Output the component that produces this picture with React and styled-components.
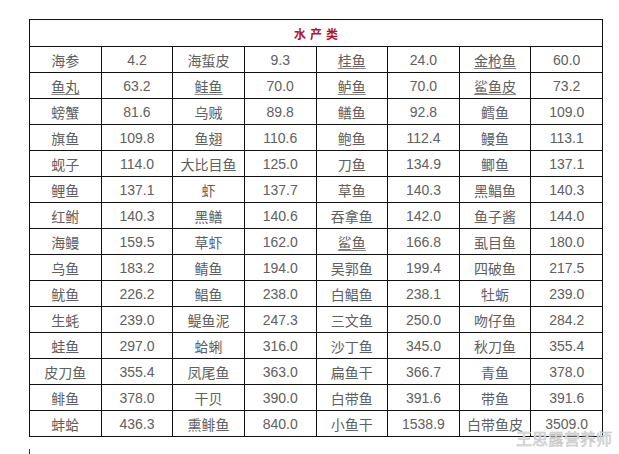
import React from "react";
import styled, { createGlobalStyle } from "styled-components";

const Global = createGlobalStyle`
  html, body { margin: 0; padding: 0; background: #fff; }
  body { font-family: "Liberation Sans", "Noto Sans CJK SC", sans-serif; }
`;

const Page = styled.div`
  position: relative;
  width: 619px;
  height: 454px;
  overflow: hidden;
  padding: 19px 0 0 29px;
  box-sizing: border-box;
`;

const Table = styled.table`
  border-collapse: collapse;
  width: 574px;
  table-layout: fixed;
`;

const HeadCell = styled.th`
  border: 1px solid #111;
  height: 26px;
  padding: 0;
  color: #b3122e;
  font-size: 12px;
  font-weight: bold;
  letter-spacing: 4px;
  text-indent: 4px;
  text-align: center;
  font-family: "Noto Sans CJK SC", sans-serif;
`;

const Cell = styled.td`
  border: 1px solid #111;
  height: 25px;
  padding: 0;
  text-align: center;
  font-size: 14px;
  color: #606060;
  line-height: 16px;
  font-family: ${(p) =>
    p.$num ? `"Liberation Sans", sans-serif` : `"Noto Sans CJK SC", sans-serif`};
  text-decoration: ${(p) => (p.$link ? "underline" : "none")};
  text-decoration-color: #888;
  text-underline-offset: 2px;
  white-space: nowrap;
`;

const Cursor = styled.div`
  width: 1px;
  height: 6px;
  background: #333;
  margin-top: 12px;
`;

const Watermark = styled.div`
  position: absolute;
  left: 516px;
  top: 426px;
  font-family: "Noto Sans CJK SC", sans-serif;
  font-size: 16px;
  color: #e4e4e4;
  -webkit-text-stroke: 0.5px #c2c2c2;
  text-shadow: 0 0 1px #fff;
`;

const links = new Set(["鱼丸", "鲑鱼", "桂鱼", "金枪鱼", "鲈鱼", "鲨鱼皮", "鲨鱼"]);

const rows = [
  ["海参", "4.2", "海蜇皮", "9.3", "桂鱼", "24.0", "金枪鱼", "60.0"],
  ["鱼丸", "63.2", "鲑鱼", "70.0", "鲈鱼", "70.0", "鲨鱼皮", "73.2"],
  ["螃蟹", "81.6", "乌贼", "89.8", "鳝鱼", "92.8", "鳕鱼", "109.0"],
  ["旗鱼", "109.8", "鱼翅", "110.6", "鲍鱼", "112.4", "鳗鱼", "113.1"],
  ["蚬子", "114.0", "大比目鱼", "125.0", "刀鱼", "134.9", "鲫鱼", "137.1"],
  ["鲤鱼", "137.1", "虾", "137.7", "草鱼", "140.3", "黑鲳鱼", "140.3"],
  ["红鲋", "140.3", "黑鳝", "140.6", "吞拿鱼", "142.0", "鱼子酱", "144.0"],
  ["海鳗", "159.5", "草虾", "162.0", "鲨鱼", "166.8", "虱目鱼", "180.0"],
  ["乌鱼", "183.2", "鲭鱼", "194.0", "吴郭鱼", "199.4", "四破鱼", "217.5"],
  ["鱿鱼", "226.2", "鲳鱼", "238.0", "白鲳鱼", "238.1", "牡蛎", "239.0"],
  ["生蚝", "239.0", "鳀鱼泥", "247.3", "三文鱼", "250.0", "吻仔鱼", "284.2"],
  ["蛙鱼", "297.0", "蛤蜊", "316.0", "沙丁鱼", "345.0", "秋刀鱼", "355.4"],
  ["皮刀鱼", "355.4", "凤尾鱼", "363.0", "扁鱼干", "366.7", "青鱼", "378.0"],
  ["鲱鱼", "378.0", "干贝", "390.0", "白带鱼", "391.6", "带鱼", "391.6"],
  ["蚌蛤", "436.3", "熏鲱鱼", "840.0", "小鱼干", "1538.9", "白带鱼皮", "3509.0"],
];

export default function App() {
  return (
    <>
      <Global />
      <Page>
        <Table>
          <thead>
            <tr>
              <HeadCell colSpan={8}>水产类</HeadCell>
            </tr>
          </thead>
          <tbody>
            {rows.map((r, i) => (
              <tr key={i}>
                {r.map((c, j) => (
                  <Cell key={j} $num={j % 2 === 1} $link={j % 2 === 0 && links.has(c)}>
                    {c}
                  </Cell>
                ))}
              </tr>
            ))}
          </tbody>
        </Table>
        <Cursor />
        <Watermark>王思露营养师</Watermark>
      </Page>
    </>
  );
}
